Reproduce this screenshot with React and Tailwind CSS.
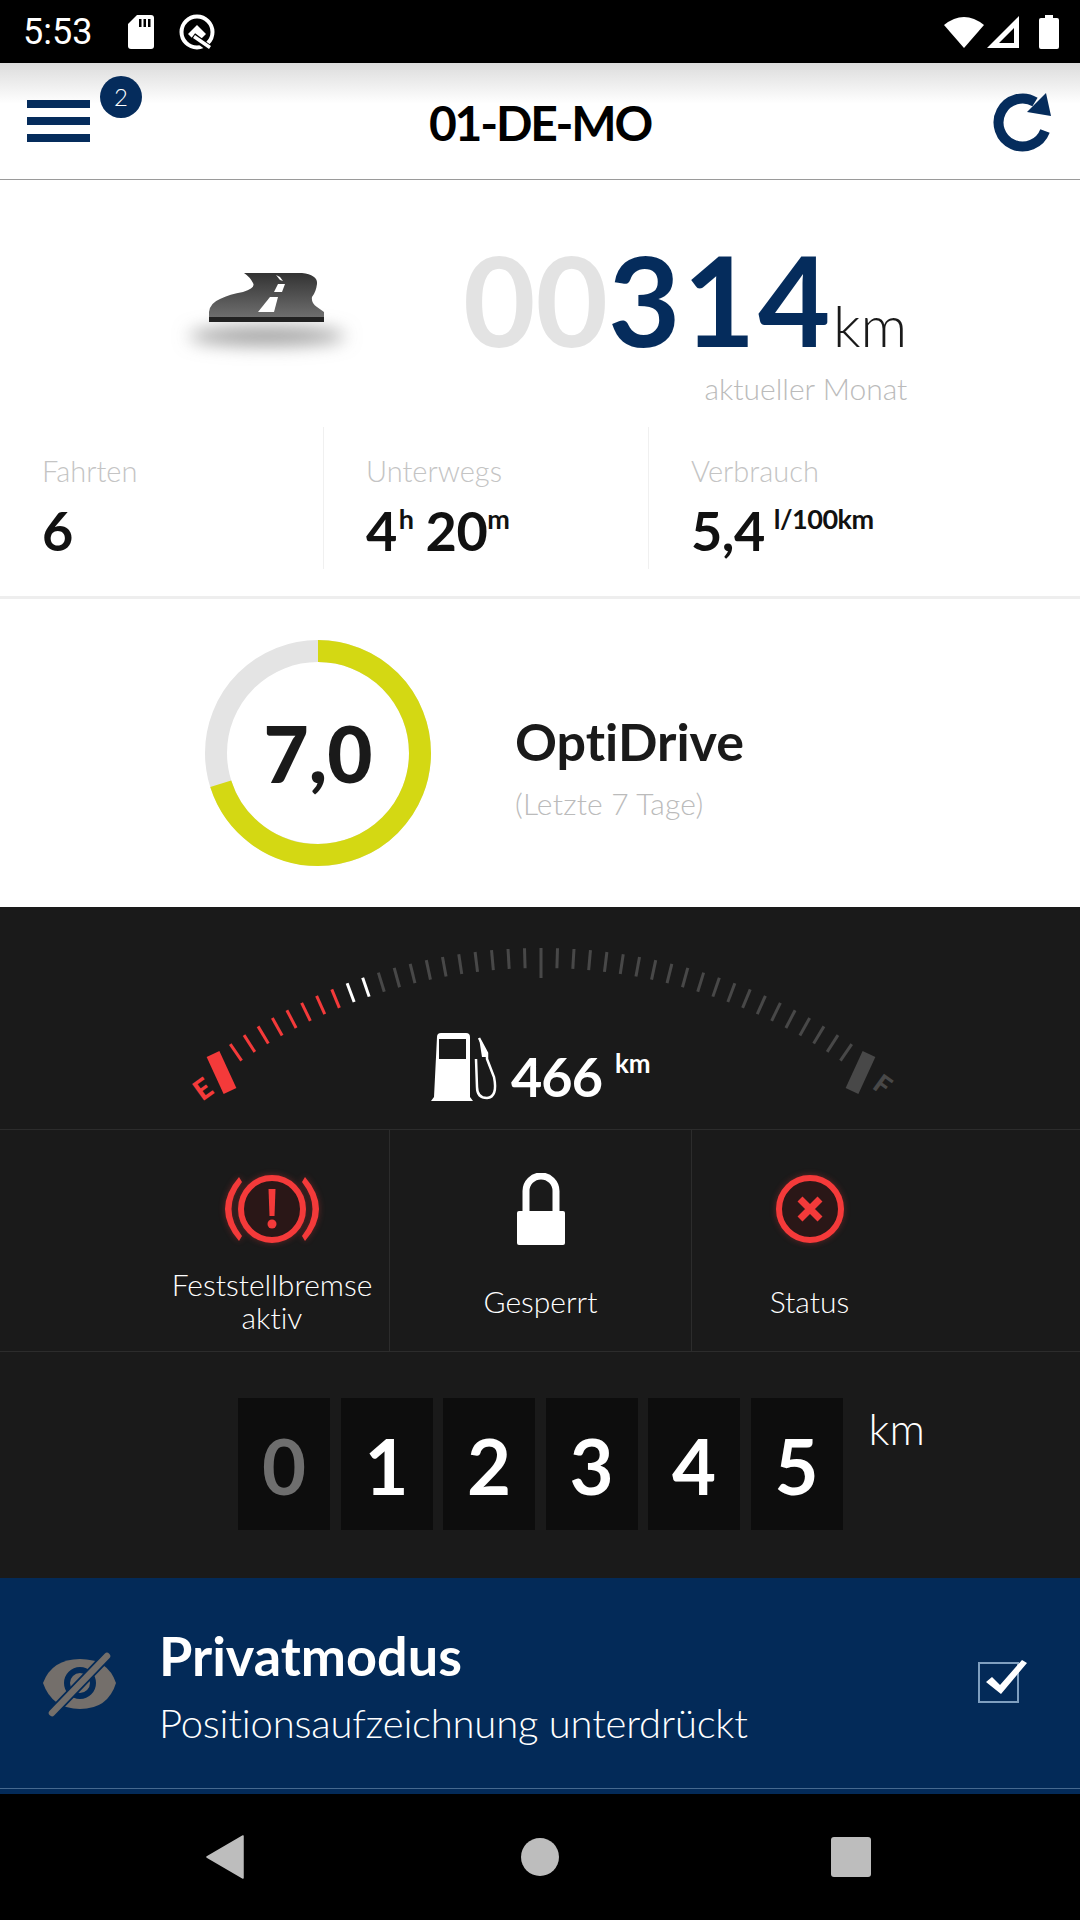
import React from "react";

const NAVY = "#052c5c";

function StatusBar() {
  return (
    <div className="flex h-[63px] items-center justify-between bg-black pl-[23px] pr-[20px] text-white">
      <div className="flex items-center">
        <span className="w-[104px] font-[family-name:Roboto,sans-serif] text-[36px] leading-none">5:53</span>
        <svg width="28" height="34" viewBox="0 0 28 34">
          <path d="M10 0h14a3 3 0 0 1 3 3v28a3 3 0 0 1-3 3H4a3 3 0 0 1-3-3V9z" fill="#fff" />
          <path d="M12 4h2.5v8H12zM16.5 4H19v8h-2.5zM21 4h2.5v8H21z" fill="#000" />
        </svg>
        <svg className="ml-[23px]" width="38" height="38" viewBox="0 0 38 38">
          <circle cx="19" cy="19" r="15.5" fill="none" stroke="#fff" strokeWidth="4" />
          <path d="M10 21 L19 12 L28 21 L24 25 H14 Z" fill="#fff" />
          <path d="M15 23 L31 35" stroke="#000" strokeWidth="7" />
          <path d="M16 23.5 L32 34.5" stroke="#fff" strokeWidth="3.5" />
        </svg>
      </div>
      <div className="flex items-center">
        <svg width="42" height="34" viewBox="0 0 42 34">
          <path d="M21 33 L1 10 Q21 -6 41 10 Z" fill="#fff" />
        </svg>
        <svg className="ml-[1px]" width="34" height="34" viewBox="0 0 34 34">
          <path d="M33 1 V33 H1 Z M28 13 L13 28 H28 Z" fill="#fff" fillRule="evenodd" />
        </svg>
        <svg className="ml-[18px]" width="22" height="34" viewBox="0 0 22 34">
          <path d="M7 0h8v3h4a2 2 0 0 1 2 2v27a2 2 0 0 1-2 2H3a2 2 0 0 1-2-2V5a2 2 0 0 1 2-2h4z" fill="#fff" />
        </svg>
      </div>
    </div>
  );
}

function Header() {
  return (
    <div className="relative grid h-[117px] grid-cols-[1fr_auto_1fr] items-center border-b border-[#9a9a9a] bg-linear-to-b from-[#dcdcdc] via-white via-35% to-white px-[15px]">
      <div className="ml-[12px] flex w-[63px] flex-col gap-[9px]">
        <div className="h-[8px] bg-[#052c5c]" />
        <div className="h-[8px] bg-[#052c5c]" />
        <div className="h-[8px] bg-[#052c5c]" />
      </div>
      <span className="absolute left-[100px] top-[13px] flex h-[42px] w-[42px] items-center justify-center rounded-full bg-[#052c5c] text-[24px] font-light text-white">
        2
      </span>
      <h1 className="pt-[4px] text-[48px] font-bold tracking-[-2.2px] text-black">01-DE-MO</h1>
      <svg className="-mt-[3px] justify-self-end" width="85" height="80" viewBox="0 0 85 80">
        <path d="M65 51 A24 24 0 1 1 55 22" fill="none" stroke={NAVY} strokeWidth="10" />
        <path d="M66 13 L71 36 L47 32 Z" fill={NAVY} />
      </svg>
    </div>
  );
}

function RoadIcon() {
  return (
    <svg className="overflow-visible" width="200" height="100" viewBox="0 0 200 100">
      <defs>
        <linearGradient id="road" x1="0" y1="0" x2="0" y2="1">
          <stop offset="0" stopColor="#333" />
          <stop offset="1" stopColor="#6e6e6e" />
        </linearGradient>
        <filter id="soft" x="-40%" y="-200%" width="180%" height="500%">
          <feGaussianBlur stdDeviation="9" />
        </filter>
      </defs>
      <ellipse cx="97" cy="76" rx="78" ry="9" fill="#9a9a9a" filter="url(#soft)" />
      <path d="M74 13 H132 Q148 15 147 24 Q146 32 142 37 Q141 43 147 47 L154 52 V57 H39 V52 Q40 43 50 39 Q60 34 73 32 Q86 28 83 23 Q80 17 74 13 Z" fill="url(#road)" />
      <rect x="39" y="57" width="115" height="5" fill="#222" />
      <path d="M100 37 H108 L104 52 H88 Z" fill="#fff" />
      <path d="M108 24 H115 L112 32 H104 Z" fill="#fff" />
      <path d="M106 15 L110 17 L113 21 L110 20 Z" fill="#fff" />
    </svg>
  );
}

function Stat({ label, children, className }) {
  return (
    <div className={`h-[142px] pt-[28px] ${className}`}>
      <div className="text-[29px] font-light leading-[32px] text-[#c4c4c4]">{label}</div>
      <div className="mt-[14px] flex items-start text-[54px] font-bold leading-[60px] tracking-[-0.5px] text-[#111111]">{children}</div>
    </div>
  );
}

function Sup({ children, className = "" }) {
  return <span className={`text-[27px] font-bold leading-[36px] ${className}`}>{children}</span>;
}

function Ring() {
  const r = 102;
  const len = 2 * Math.PI * r;
  return (
    <div className="relative h-[226px] w-[226px]">
      <svg width="226" height="226" viewBox="0 0 226 226">
        <circle cx="113" cy="113" r={r} fill="none" stroke="#e4e4e4" strokeWidth="22" />
        <circle
          cx="113"
          cy="113"
          r={r}
          fill="none"
          stroke="#d4d813"
          strokeWidth="22"
          strokeDasharray={`${len * 0.7} ${len}`}
          transform="rotate(-90 113 113)"
        />
      </svg>
      <span className="absolute inset-0 flex items-center justify-center text-[78px] font-black text-[#1a1a1a]">7,0</span>
    </div>
  );
}

function Gauge() {
  const cx = 541;
  const cy = 591;
  const step = 1.72;
  const ticks = [];
  for (let i = -20; i <= 20; i++) {
    const a = (i * step * Math.PI) / 180;
    const inner = i === 0 ? 520 : 530;
    let color = "#484848";
    if (i <= -13) color = "#f43a3a";
    else if (i <= -11) color = "#ffffff";
    ticks.push(
      <line
        key={i}
        x1={cx + 550 * Math.sin(a)}
        y1={cy - 550 * Math.cos(a)}
        x2={cx + inner * Math.sin(a)}
        y2={cy - inner * Math.cos(a)}
        stroke={color}
        strokeWidth="3"
      />
    );
  }
  return (
    <svg className="absolute inset-0" width="1080" height="222" viewBox="0 0 1080 222">
      {ticks}
      <line x1="213" y1="147" x2="230" y2="184" stroke="#f43a3a" strokeWidth="14" />
      <line x1="869" y1="147" x2="852" y2="184" stroke="#484848" strokeWidth="14" />
      <text x="203" y="192" fontSize="28" fontWeight="900" fill="#f43a3a" textAnchor="middle" transform="rotate(-36 203 182)">E</text>
      <text x="883" y="187" fontSize="26" fontWeight="900" fill="#484848" textAnchor="middle" transform="rotate(36 883 177)">F</text>
    </svg>
  );
}

function FuelPump() {
  return (
    <svg width="68" height="68" viewBox="0 0 68 68">
      <path fillRule="evenodd" fill="#fff" d="M6 4a4 4 0 0 1 4-4h25a4 4 0 0 1 4 4v60l3 4H0l3-4zM8 6v20h27V6z" />
      <path d="M48 5 L56 20 L56 26 L63 44 Q67 64 56 65 Q46 65 46 54 L45 26" fill="none" stroke="#fff" strokeWidth="2.5" />
      <path d="M48 5 L55 17 L55 24 L51 24 Z" fill="#fff" />
    </svg>
  );
}

function BrakeIcon() {
  return (
    <svg className="drop-shadow-[0_0_3px_rgba(244,58,58,0.35)]" width="94" height="70" viewBox="0 0 94 70">
      <circle cx="47" cy="35" r="31" fill="#2a1717" stroke="#f43a3a" strokeWidth="6" />
      <path d="M14 3 Q-14 35 14 67 L17 62 Q-4 35 17 8 Z" fill="#f43a3a" />
      <path d="M80 3 Q108 35 80 67 L77 62 Q98 35 77 8 Z" fill="#f43a3a" />
      <path d="M43.5 15 H50.5 L49.5 42 H44.5 Z" fill="#f43a3a" />
      <circle cx="47" cy="50" r="4.5" fill="#f43a3a" />
    </svg>
  );
}

function LockIcon() {
  return (
    <svg width="50" height="72" viewBox="0 0 50 72">
      <path d="M10 38 V18 a15 15 0 0 1 30 0 V38" fill="none" stroke="#fff" strokeWidth="7" />
      <rect x="1" y="38" width="48" height="34" rx="2" fill="#fff" />
    </svg>
  );
}

function StatusIcon() {
  return (
    <svg className="drop-shadow-[0_0_3px_rgba(244,58,58,0.35)]" width="70" height="70" viewBox="0 0 70 70">
      <circle cx="35" cy="35" r="31" fill="#2a1717" stroke="#f43a3a" strokeWidth="6" />
      <path d="M25 25 L45 45 M45 25 L25 45" stroke="#f43a3a" strokeWidth="7" />
    </svg>
  );
}

function StateCell({ icon, className, children }) {
  return (
    <div className={`flex flex-col items-center pt-[43px] ${className}`}>
      <div className="flex h-[72px] items-center justify-center">{icon}</div>
      <div className="mt-[23px] flex h-[66px] items-center text-center text-[30px] font-light leading-[33px] text-white">
        <span>{children}</span>
      </div>
    </div>
  );
}

function Odometer() {
  const digits = ["0", "1", "2", "3", "4", "5"];
  return (
    <div className="flex h-[227px] items-start justify-start border-t border-[#2c2c2c] pl-[238px] pt-[46px]">
      <div className="flex gap-[10.5px]">
        {digits.map((d, i) => (
          <div
            key={i}
            className={`flex h-[132px] w-[92px] items-center justify-center bg-[#0d0d0d] pt-[4px] text-[76px] font-bold ${i === 0 ? "text-[#6e6e6e]" : "text-white"}`}
          >
            {d}
          </div>
        ))}
      </div>
      <span className="ml-[26px] text-[44px] font-light leading-[60px] text-white">km</span>
    </div>
  );
}

function PrivatBar() {
  return (
    <div className="h-[216px] bg-[#032a58]">
      <div className="flex h-[211px] items-start border-b border-[#46698f] pl-[30px]">
        <svg className="mt-[62px]" width="100" height="85" viewBox="0 0 100 85">
          <path fill="#746f6b" d="M13 43 Q22 19 50 19 Q78 19 86 43 Q78 69 50 69 Q22 69 13 43 Z" />
          <circle cx="50" cy="43" r="13" fill="#746f6b" stroke="#032a58" strokeWidth="6" />
          <path d="M77 16 L22 73" stroke="#032a58" strokeWidth="10" strokeLinecap="round" />
          <path d="M77 16 L22 73" stroke="#746f6b" strokeWidth="6.5" strokeLinecap="round" />
        </svg>
        <div className="ml-[29px] flex-1 pt-[46px]">
          <div className="text-[54px] font-bold leading-[64px] text-white">Privatmodus</div>
          <div className="mt-[10px] text-[40px] font-light leading-[50px] tracking-[-0.2px] text-white">Positionsaufzeichnung unterdrückt</div>
        </div>
        <div className="relative mr-[61px] mt-[84px] h-[41px] w-[41px] border-2 border-[#7f9fc0]">
          <svg className="absolute -top-[8px] left-[4px]" width="46" height="42" viewBox="0 0 46 42">
            <path d="M2 26 L8 21 L16 29 L38 4 L43 7 L17 38 Z" fill="#fff" />
          </svg>
        </div>
      </div>
    </div>
  );
}

function NavBar() {
  return (
    <div className="relative flex flex-1 items-center bg-black">
      <svg className="ml-[206px]" width="38" height="44" viewBox="0 0 38 44">
        <path d="M37 1 V43 L1 22 Z" fill="#bdbdbd" stroke="#bdbdbd" strokeWidth="1.5" strokeLinejoin="round" />
      </svg>
      <div className="ml-[277px] h-[38px] w-[38px] rounded-full bg-[#bdbdbd]" />
      <div className="ml-[272px] h-[40px] w-[40px] rounded-[3px] bg-[#bdbdbd]" />
    </div>
  );
}

export default function App() {
  return (
    <div className="flex h-[1920px] w-[1080px] flex-col overflow-hidden bg-white font-[family-name:Lato,sans-serif] [font-variant-ligatures:none]">
      <StatusBar />
      <Header />

      <div className="flex h-[247px] items-start">
        <div className="ml-[170px] mt-[80px]">
          <RoadIcon />
        </div>
        <div className="ml-[93px] mt-[44px] flex flex-col items-end">
          <div className="flex items-baseline">
            <span className="text-[125px] font-bold leading-[150px] text-[#e3e3e3]">00</span>
            <span className="text-[125px] font-bold leading-[150px] tracking-[2.5px] text-[#052c5c]">314</span>
            <span className="text-[58px] font-light leading-[60px] text-[#1a1a1a]">km</span>
          </div>
          <span className="-mt-[6px] text-[30px] font-light leading-[40px] text-[#bbbbbb]">aktueller Monat</span>
        </div>
      </div>

      <div className="flex h-[172px] items-start border-b-[3px] border-[#eeeeee]">
        <Stat label="Fahrten" className="w-[324px] border-r border-[#f0f0f0] pl-[42px]">6</Stat>
        <Stat label="Unterwegs" className="w-[325px] border-r border-[#f0f0f0] pl-[42px]">
          4<Sup className="ml-[2px]">h</Sup>
          <span className="ml-[12px]">20</span>
          <Sup className="text-[25px]">m</Sup>
        </Stat>
        <Stat label="Verbrauch" className="flex-1 pl-[42px]">
          5,4<Sup className="ml-[9px]">l/100km</Sup>
        </Stat>
      </div>

      <div className="flex h-[308px] items-center pl-[205px]">
        <Ring />
        <div className="ml-[84px] pt-[26px]">
          <div className="text-[52px] font-bold leading-[60px] text-[#1a1a1a]">OptiDrive</div>
          <div className="mt-[14px] text-[30px] font-light leading-[36px] tracking-[0.2px] text-[#bbbbbb]">(Letzte 7 Tage)</div>
        </div>
      </div>

      <div className="bg-[#1a1a1a]">
        <div className="relative h-[222px]">
          <Gauge />
          <div className="absolute left-[431px] top-[126px] flex items-start">
            <FuelPump />
            <span className="ml-[12px] mt-[12px] text-[54px] font-bold leading-[64px] tracking-[-1px] text-white">466</span>
            <span className="ml-[13px] mt-[14px] text-[26px] font-bold leading-[32px] text-white">km</span>
          </div>
        </div>
        <div className="grid h-[222px] grid-cols-[390px_302px_1fr] border-t border-[#2c2c2c]">
          <StateCell icon={<BrakeIcon />} className="border-r border-[#2c2c2c] pl-[155px]">
            Feststellbremse
            <br />
            aktiv
          </StateCell>
          <StateCell icon={<LockIcon />} className="border-r border-[#2c2c2c]">Gesperrt</StateCell>
          <StateCell icon={<StatusIcon />} className="pr-[153px]">Status</StateCell>
        </div>
        <Odometer />
      </div>

      <PrivatBar />
      <NavBar />
    </div>
  );
}
